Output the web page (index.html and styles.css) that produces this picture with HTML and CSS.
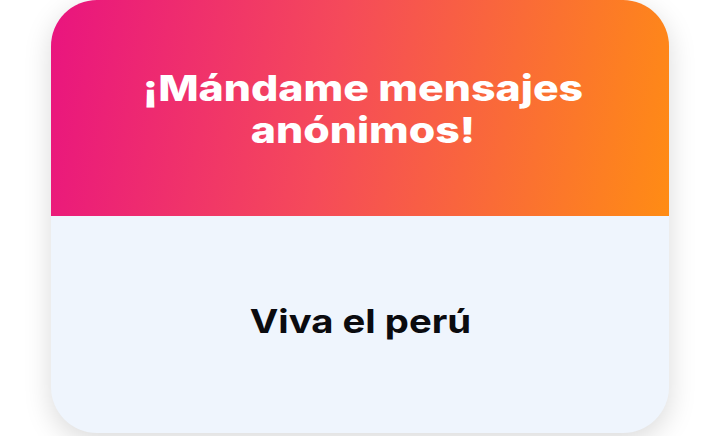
FILE: index.html
```html
<!DOCTYPE html>
<html lang="es">
<head>
    <meta charset="UTF-8">
    <meta name="viewport" content="width=device-width, initial-scale=1.0">
    <title>Mensajes anónimos</title>
    <link rel="stylesheet" href="styles.css">
</head>
<body>

<div class="page">
    <div class="card">
        <div class="card-header">
            <h1>¡Mándame mensajes anónimos!</h1>
        </div>
        <div class="card-body">
            <p class="message">Viva el perú</p>
        </div>
    </div>
</div>

</body>
</html>
```

FILE: styles.css
```css
/* Page */
body {
    margin: 0;
    background-color: #ffffff;
    font-family: Inter, "Noto Sans", sans-serif;
}
.page {
    display: flex;
    justify-content: center;
    padding: 0 51px 3px;
    height: 436px;
    box-sizing: border-box;
}
/* Card */
.card {
    width: 618px;
    display: flex;
    flex-direction: column;
    border-radius: 46px;
    overflow: hidden;
    background-color: #eff5fd;
    box-shadow: 0 8px 28px rgba(0, 0, 0, 0.15);
}
.card-header {
    height: 216px;
    display: flex;
    align-items: center;
    justify-content: center;
    background: linear-gradient(100deg, #e9147f 0%, #f54a5a 45%, #ff8c14 100%);
}
/* the lettering in the original is a wide grotesque, so stretch it */
.card-header h1 {
    margin: 2px 0 0 6px;
    width: 390px;
    color: #ffffff;
    font-size: 36px;
    font-weight: 800;
    line-height: 42px;
    text-align: center;
    transform: scaleX(1.19);
}
.card-body {
    flex: 1;
    display: flex;
    align-items: center;
    justify-content: center;
}
.message {
    margin: 0 0 8px;
    color: #0b0b0f;
    font-size: 33px;
    font-weight: 700;
    transform: scaleX(1.16);
}
```
